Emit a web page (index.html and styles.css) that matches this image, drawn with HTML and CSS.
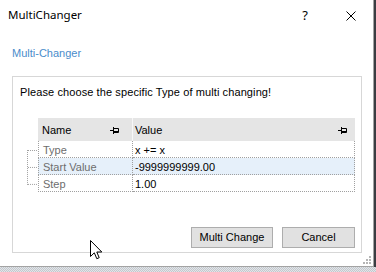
FILE: index.html
```html
<!DOCTYPE html>
<html>
<head>
<meta charset="utf-8">
<link rel="stylesheet" href="styles.css">
</head>
<body>
<div class="window">
  <div class="titlebar">
    <span class="title">MultiChanger</span>
    <span class="help">?</span>
    <svg class="close" width="10" height="10" viewBox="0 0 10 10"><path d="M0.5 0.5 L9.5 9.5 M9.5 0.5 L0.5 9.5" stroke="#000" stroke-width="1"/></svg>
  </div>
  <div class="label">Multi-Changer</div>
  <div class="group">
    <div class="intro">Please choose the specific Type of multi changing!</div>
    <div class="gridwrap">
      <svg class="tree" width="11" height="74" viewBox="0 0 11 74">
        <g stroke="#a0a0a0" stroke-width="1" stroke-dasharray="1 1" fill="none">
          <path d="M0.5 32 V67"/>
          <path d="M1 32.5 H11"/>
          <path d="M1 49.5 H11"/>
          <path d="M1 66.5 H11"/>
        </g>
      </svg>
      <div class="table">
        <div class="hrow">
          <div class="hcell name">Name<svg class="pin" width="9" height="7" viewBox="0 0 9 7"><path d="M0 3.5 H3 M3.5 0 V7 M3.5 1.5 H8.5 V5.5 H3.5 M3.5 4.5 H8.5" stroke="#000" stroke-width="1" fill="none"/></svg></div>
          <div class="hcell value">Value<svg class="pin" width="9" height="7" viewBox="0 0 9 7"><path d="M0 3.5 H3 M3.5 0 V7 M3.5 1.5 H8.5 V5.5 H3.5 M3.5 4.5 H8.5" stroke="#000" stroke-width="1" fill="none"/></svg></div>
        </div>
        <div class="row">
          <div class="cell name">Type</div>
          <div class="cell value">x += x</div>
        </div>
        <div class="row selected">
          <div class="cell name">Start Value</div>
          <div class="cell value">-9999999999.00</div>
        </div>
        <div class="row">
          <div class="cell name">Step</div>
          <div class="cell value">1.00</div>
        </div>
      </div>
    </div>
    <div class="buttons">
      <button class="btn btn-multi">Multi Change</button>
      <button class="btn btn-cancel">Cancel</button>
    </div>
  </div>
  <svg class="grip" width="9" height="9" viewBox="0 0 9 9">
    <g fill="#b5b5b5">
      <rect x="6" y="0" width="2" height="2"/>
      <rect x="3" y="3" width="2" height="2"/>
      <rect x="6" y="3" width="2" height="2"/>
      <rect x="0" y="6" width="2" height="2"/>
      <rect x="3" y="6" width="2" height="2"/>
      <rect x="6" y="6" width="2" height="2"/>
    </g>
  </svg>
  <svg class="cursor" width="13" height="20" viewBox="0 0 13 20">
    <path d="M0.5 0.5 L0.5 16.5 L4.3 12.8 L6.8 18.7 L9.2 17.7 L6.8 12 L11.8 12 Z" fill="#fff" stroke="#000" stroke-width="1" stroke-linejoin="miter"/>
  </svg>
</div>
<div class="edge"></div>
<div class="bottomstrip"></div>
</body>
</html>
```

FILE: styles.css
```css
html, body {
  margin: 0;
  padding: 0;
}
body {
  width: 376px;
  height: 272px;
  overflow: hidden;
  background: #3d4046;
  display: grid;
  grid-template-columns: 374px 2px;
  grid-template-rows: 267px 5px;
  font-family: "Liberation Sans", Arial, sans-serif;
  font-size: 11px;
  color: #000;
}
.window {
  grid-row: 1;
  grid-column: 1;
  position: relative;
  box-sizing: border-box;
  background: #fff;
  border-right: 1px solid #a3a3a3;
  border-bottom: 1px solid #a3a3a3;
}
.edge {
  grid-row: 1;
  grid-column: 2;
  background: #3a3d42;
}
.bottomstrip {
  grid-row: 2;
  grid-column: 1 / span 2;
  background: repeating-conic-gradient(#c3c8ce 0 25%, #e2e5e8 0 50%) 0 0 / 2px 2px;
}
.titlebar {
  height: 40px;
  display: flex;
  align-items: flex-start;
  box-sizing: border-box;
  padding-top: 7px;
}
.title {
  font-family: "Noto Sans", "Open Sans", sans-serif;
  font-size: 11.5px;
  line-height: 16px;
  margin-left: 8px;
  flex: 1;
}
.help {
  font-family: "Noto Sans", "Open Sans", sans-serif;
  font-size: 13px;
  line-height: 16px;
  margin-right: 38px;
}
.close {
  margin-top: 4px;
  margin-right: 17px;
}
.label {
  color: #4a8ccb;
  line-height: 13px;
  padding-top: 7px;
  margin-left: 12px;
}
.group {
  margin-top: 16px;
  margin-left: 12px;
  width: 350px;
  height: 177px;
  box-sizing: border-box;
  border: 1px solid #d7d7d7;
  padding: 9px 6px 0 7px;
}
.intro {
  line-height: 13px;
  letter-spacing: 0.1px;
}
.gridwrap {
  display: flex;
  margin-top: 19px;
  margin-left: 7px;
}
.tree {
  display: block;
}
.table {
  width: 318px;
}
.hrow {
  display: flex;
  height: 23px;
  background: #e5e5e5;
}
.hcell {
  display: flex;
  align-items: flex-start;
  justify-content: space-between;
  box-sizing: border-box;
  padding-top: 6px;
  line-height: 13px;
}
.hcell.name {
  width: 95px;
  padding-left: 4px;
  padding-right: 13px;
  border-right: 1px solid #f7f7f7;
}
.hcell.value {
  flex: 1;
  padding-left: 2px;
  padding-right: 8px;
}
.pin {
  margin-top: 3px;
}
.row {
  display: flex;
  height: 17px;
}
.row.selected {
  background: #e6f0fa;
}
.cell {
  box-sizing: border-box;
  height: 17px;
  padding-top: 3px;
  line-height: 13px;
  border-bottom: 1px dotted #a0a0a0;
  white-space: nowrap;
}
.cell.name {
  width: 95px;
  padding-left: 4px;
  color: #6d6d6d;
  border-left: 1px dotted #a0a0a0;
  border-right: 1px dotted #a0a0a0;
}
.cell.value {
  flex: 1;
  padding-left: 2px;
  border-right: 1px dotted #a0a0a0;
}
.buttons {
  display: flex;
  justify-content: flex-end;
  gap: 9px;
  margin-top: 35px;
}
.btn {
  font-family: "Liberation Sans", Arial, sans-serif;
  font-size: 11px;
  height: 21px;
  padding: 0;
  margin: 0;
  background: #e1e1e1;
  border: 1px solid #adadad;
  border-radius: 0;
  color: #000;
  line-height: 13px;
}
.btn-multi {
  width: 82px;
}
.btn-cancel {
  width: 73px;
}
.grip {
  position: absolute;
  right: 1px;
  bottom: 1px;
}
.cursor {
  position: absolute;
  left: 90px;
  top: 240px;
}
```
